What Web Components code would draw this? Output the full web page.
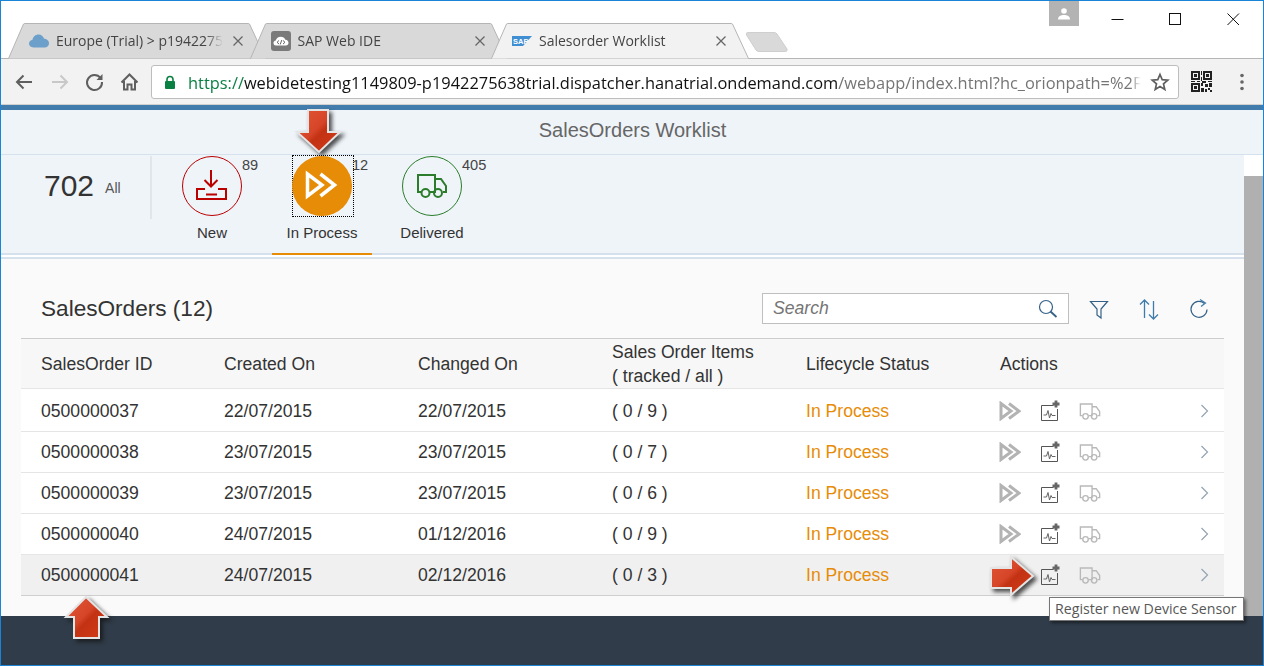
<!DOCTYPE html>
<html>
<head>
<meta charset="utf-8">
<title>Salesorder Worklist</title>
<style>
html, body { margin: 0; padding: 0; height: 100%; overflow: hidden; background: #fff; }
</style>
</head>
<body>
<so-app></so-app>
<script>
const truckPaths = `<path d="M20 37H17V20H34V37H29M34 24H40L45 31V37H42M34 37V24M32 37H34"/><circle cx="24.5" cy="38" r="4"/><circle cx="37" cy="38" r="4"/>`;

// browser tab
class BrowserTab extends HTMLElement {
  constructor() {
    super();
    const active = this.hasAttribute('active');
    const fill = active ? '#f2f2f2' : '#d9d9d9';
    this.attachShadow({ mode: 'open' }).innerHTML = `
<style>
:host { display: block; position: relative; width: 258px; height: 36px; margin-right: -16.5px; flex: none; font: 14px "Open Sans", sans-serif; color: #444; z-index: ${active ? 2 : 1}; }
svg.shape { position: absolute; left: 0; top: 0; }
.in { position: relative; display: flex; align-items: center; height: 35px; padding-left: 21px; box-sizing: border-box; }
.fav { width: 20px; height: 20px; flex: none; display: flex; }
.name { margin-left: 7px; width: 167px; white-space: nowrap; overflow: hidden; -webkit-mask-image: linear-gradient(to right, #000 150px, transparent 167px); mask-image: linear-gradient(to right, #000 150px, transparent 167px); }
.x { margin-left: 9px; width: 12px; height: 12px; flex: none; }
</style>
<svg class="shape" width="258" height="36"><path d="M0.5 35.5 L15.5 1 Q16 0.5 17 0.5 H240 Q241 0.5 241.5 1 L257.5 35.5" fill="${fill}" stroke="#b5b5b5"/></svg>
<div class="in">
  <div class="fav"><slot name="icon"></slot></div>
  <div class="name"><slot></slot></div>
  <svg class="x" viewBox="0 0 12 12"><path d="M1.5 1.5L10.5 10.5M10.5 1.5L1.5 10.5" stroke="#666" stroke-width="1.3"/></svg>
</div>`;
  }
}
customElements.define('browser-tab', BrowserTab);

// tab strip and address bar
class BrowserBar extends HTMLElement {
  constructor() {
    super();
    this.attachShadow({ mode: 'open' }).innerHTML = `
<style>
:host { display: block; }
.top { height: 57px; background: #fff; border-bottom: 1px solid #b5b5b5; position: relative; display: flex; justify-content: space-between; }
.tabs { display: flex; align-items: flex-end; padding-left: 7px; margin-bottom: -1px; }
.newtab { margin-left: 12px; align-self: flex-start; margin-top: 30px; }
.win { display: flex; align-items: flex-start; padding-right: 1px; }
.profile { width: 30px; height: 25px; background: #b3b3b3; display: flex; align-items: center; justify-content: center; margin-right: 9px; }
.wbtn { width: 58px; height: 36px; display: flex; align-items: center; justify-content: center; }
.tool { height: 45px; background: #f2f2f2; border-bottom: 1px solid #d0d0d0; display: flex; align-items: center; }
.nav { display: flex; width: 150px; padding-left: 6px; box-sizing: border-box; flex: none; }
.nav svg { width: 35px; height: 24px; flex: none; }
.addr { flex: none; width: 1028px; height: 34px; box-sizing: border-box; margin-top: 1px; background: #fff; border: 1px solid #bdbdbd; border-radius: 3px; display: flex; align-items: center; }
.lock { margin-left: 12px; width: 12px; height: 15px; flex: none; }
.url { margin-left: 12px; width: 953px; flex: none; white-space: nowrap; overflow: hidden; font: 16.4px "Open Sans", sans-serif; color: #757575; -webkit-mask-image: linear-gradient(to right, #000 942px, transparent 953px); mask-image: linear-gradient(to right, #000 942px, transparent 953px); }
.url b { font-weight: 400; color: #0b8043; }
.url i { font-style: normal; color: #111; }
.star { margin-left: 9px; flex: none; }
.qr { margin-left: 12px; flex: none; }
.dots { margin-left: 27px; flex: none; }
</style>
<div class="top">
  <div class="tabs">
    <browser-tab>
      <svg slot="icon" width="20" height="20" viewBox="0 0 20 20"><path d="M4.5 16.5 C1.5 16.5 0 14.6 0 12.6 C0 10.4 1.6 9 3.4 8.9 C4 5.6 6.600 3.500 9.500 3.500 C12.200 3.500 14.300 5.200 15 7.700 C17.900 7.800 20 9.800 20 12.300 C20 14.700 18.200 16.500 15.500 16.500 Z" fill="#6c9fca"/></svg>
      Europe (Trial) &gt; p1942275638trial
    </browser-tab>
    <browser-tab>
      <svg slot="icon" width="20" height="20" viewBox="0 0 20 20"><rect width="20" height="20" rx="3" fill="#7a7a7a"/><path d="M5 14.500 C3 14.500 2.500 13 2.500 12 C2.500 10.500 3.500 9.600 4.800 9.500 C5.300 7.300 7.300 5.800 9.700 5.800 C12 5.800 13.700 7 14.400 8.800 C16.300 8.900 17.500 10.300 17.500 11.800 C17.500 13.500 16.300 14.500 15 14.500 Z" fill="#fff"/><path d="M8 9.500L6 11.300L8 13M12 9.500L14 11.300L12 13M10.800 9L9.200 13.500" fill="none" stroke="#666" stroke-width="1"/></svg>
      SAP Web IDE
    </browser-tab>
    <browser-tab active>
      <svg slot="icon" width="20" height="20" viewBox="0 0 20 20"><path d="M0 5 H20 L11 15 H0 Z" fill="#3f8fd2"/><text x="1" y="12.500" font-family="Liberation Sans, sans-serif" font-size="7.500" font-weight="700" fill="#fff">SAP</text></svg>
      Salesorder Worklist
    </browser-tab>
    <svg class="newtab" width="44" height="22" viewBox="0 0 44 22"><path d="M3 1.500 H29 Q31 1.500 32 3 L42 18 Q43 20.500 40 20.500 H14 Q12 20.500 11 19 L1.500 4 Q0.500 1.500 3 1.500 Z" fill="#d9d9d9" stroke="#cfcfcf"/></svg>
  </div>
  <div class="win">
    <div class="profile"><svg width="14" height="12" viewBox="0 0 14 12"><circle cx="7" cy="3" r="2.800" fill="#fff"/><path d="M1 11.500 C1 8 4 7 7 7 C10 7 13 8 13 11.500 Z" fill="#fff"/></svg></div>
    <div class="wbtn"><svg width="14" height="14" viewBox="0 0 14 14"><path d="M1.500 7.500H13.500" stroke="#111"/></svg></div>
    <div class="wbtn"><svg width="14" height="14" viewBox="0 0 14 14"><rect x="1.500" y="1.500" width="11" height="11" fill="none" stroke="#111"/></svg></div>
    <div class="wbtn"><svg width="14" height="14" viewBox="0 0 14 14"><path d="M1.500 1.500L13 13M13 1.500L1.500 13" stroke="#111"/></svg></div>
  </div>
</div>
<div class="tool">
  <div class="nav">
    <svg viewBox="0 0 35 24"><path d="M25 12H10M16.500 5.500L10 12L16.500 18.500" fill="none" stroke="#5f5f5f" stroke-width="2"/></svg>
    <svg viewBox="0 0 35 24"><path d="M10 12H25M18.500 5.500L25 12L18.500 18.500" fill="none" stroke="#c8c8c8" stroke-width="2"/></svg>
    <svg viewBox="0 0 35 24"><path d="M23.500 8 A7.500 7.500 0 1 0 25 12" fill="none" stroke="#5f5f5f" stroke-width="2"/><path d="M25.500 4V10H19.500Z" fill="#5f5f5f"/></svg>
    <svg viewBox="0 0 35 24"><path d="M9.500 12.500L17.500 4.500L25.500 12.500M12 11V19.500H15.500V14.500H19.500V19.500H23V11" fill="none" stroke="#5f5f5f" stroke-width="2"/></svg>
  </div>
  <div class="addr">
    <svg class="lock" viewBox="0 0 12 15"><path d="M3 7V4.500A3 3 0 0 1 9 4.500V7" fill="none" stroke="#0b8043" stroke-width="1.600"/><rect x="1" y="6" width="10" height="8" rx="1" fill="#0b8043"/></svg>
    <div class="url"><b>https://</b><i>webidetesting1149809-p1942275638trial.dispatcher.hanatrial.ondemand.com</i>/webapp/index.html?hc_orionpath=%2F</div>
    <svg class="star" width="20" height="20" viewBox="0 0 20 20"><path d="M10 2.500L12.200 7.700L17.800 8.200L13.500 11.900L14.800 17.400L10 14.500L5.200 17.400L6.500 11.900L2.200 8.200L7.800 7.700Z" fill="none" stroke="#5f5f5f" stroke-width="1.700"/></svg>
  </div>
  <svg class="qr" width="22" height="22" viewBox="0 0 22 22" shape-rendering="crispEdges"><path fill="#222" d="M0 0h9v9H0zM2 2v5h5V2zM3 3h3v3H3zM12 0h9v9h-9zM14 2v5h5V2zM15 3h3v3h-3zM0 12h9v9H0zM2 14v5h5v-5zM3 15h3v3H3zM10 0h1v4h-1zM10 6h1v4h-1zM0 10h4v1H0zM6 10h3v1H6zM11 10h4v2h-4zM17 10h4v1h-4zM10 12h2v3h-2zM14 13h3v3h-3zM18 12h3v4h-3zM10 17h3v4h-3zM14 18h2v3h-2zM17 17h2v2h-2zM19 19h2v2h-2z"/></svg>
  <svg class="dots" width="4" height="18" viewBox="0 0 4 18"><circle cx="2" cy="2.500" r="1.800" fill="#666"/><circle cx="2" cy="9" r="1.800" fill="#666"/><circle cx="2" cy="15.500" r="1.800" fill="#666"/></svg>
</div>`;
  }
}
customElements.define('browser-bar', BrowserBar);

// icon tab of the filter bar
class FilterTab extends HTMLElement {
  constructor() {
    super();
    const selected = this.hasAttribute('selected');
    const color = this.getAttribute('color');
    this.attachShadow({ mode: 'open' }).innerHTML = `
<style>
:host { display: block; width: 100px; position: relative; height: 100px; box-sizing: border-box; border-bottom: 2px solid ${selected ? '#e78c07' : 'transparent'}; }
.c { position: absolute; left: 19px; top: 0; width: 62px; height: 62px; }
.focus { position: absolute; left: 20px; top: 0; width: 62px; height: 62px; box-sizing: border-box; border: 1px dotted #000; }
svg { position: absolute; left: 0; top: 0; }
.count { position: absolute; left: 80px; top: 1px; font-size: 14.6px; line-height: 18px; color: #444; }
.label { position: absolute; left: 0; right: 0; top: 69px; text-align: center; font-size: 15px; line-height: 18px; color: #333; white-space: nowrap; }
</style>
${selected ? '<div class="focus"></div>' : ''}
<div class="c"><svg width="62" height="62" viewBox="0 0 62 62"><circle cx="31" cy="31" r="${selected ? 30 : 29.500}" fill="${selected ? color : 'none'}" stroke="${color}" stroke-width="${selected ? 0 : 1}"/>${this.getIcon()}</svg></div>
<span class="count">${this.getAttribute('count')}</span>
<span class="label">${this.getAttribute('label')}</span>`;
  }
  getIcon() {
    const kind = this.getAttribute('icon');
    if (kind === 'inbox') return `<g fill="none" stroke="#bb0000" stroke-width="2"><path d="M30 15V31M23.500 25L30 31.500L36.500 25"/><path d="M24 34H16V44H45V34H37M25 39.500H36"/></g>`;
    if (kind === 'process') return `<g fill="none" stroke="#fff" stroke-width="3.500" stroke-linejoin="miter"><path d="M16.500 19V41L31 30Z"/><path d="M29.500 19L43.500 30L29.500 41"/></g>`;
    return `<g fill="none" stroke="#2b7d2b" stroke-width="2">${truckPaths}</g>`;
  }
}
customElements.define('filter-tab', FilterTab);

// row of the table
class OrderRow extends HTMLElement {
  constructor() {
    super();
    const hover = this.hasAttribute('hover');
    this.attachShadow({ mode: 'open' }).innerHTML = `
<style>
:host { display: grid; grid-template-columns: 203px 194px 194px 194px 194px 1fr; height: 41px; box-sizing: border-box; border-bottom: 1px solid ${hover ? '#cfcfcf' : '#e5e5e5'}; background: ${hover ? '#f0f0f0' : '#fff'}; align-items: center; font-size: 17.6px; color: #333; }
.no { padding-left: 20px; }
.st { color: #e78c07; }
.act { display: flex; align-items: center; padding-right: 15px; margin-left: -1px; }
.act svg { flex: none; display: block; }
.go { visibility: ${hover ? 'hidden' : 'visible'}; }
.sens { margin-left: 18px; }
.truck { margin-left: 18px; }
.chev { margin-left: auto; }
</style>
<div class="no">${this.getAttribute('no')}</div>
<div>${this.getAttribute('created')}</div>
<div>${this.getAttribute('changed')}</div>
<div>${this.getAttribute('items')}</div>
<div class="st">In Process</div>
<div class="act">
  <svg class="go" width="22" height="20" viewBox="0 0 22 20"><g fill="none" stroke="#b3b3b3" stroke-width="3"><path d="M2 2.500V17.500L12 10Z"/><path d="M10 2.500L20 10L10 17.500"/></g></svg>
  <svg class="sens" width="22" height="22" viewBox="0 0 22 22"><path d="M14.500 5.500H2.500V20.500H18.500V9" fill="none" stroke="#555"/><path d="M4.500 15H7.500L9 10.500L10.500 18L12 13.500L13 15.500L16.500 15.500" fill="none" stroke="#666"/><path d="M17 0.500V7.500M13.500 4H20.500" stroke="#666" stroke-width="2.800"/></svg>
  <svg class="truck" width="22" height="19" viewBox="15 18 32 26"><g fill="none" stroke="#b9b9b9" stroke-width="2">${truckPaths}</g></svg>
  <svg class="chev" width="9" height="14" viewBox="0 0 9 14"><path d="M1.500 1L7.500 7L1.500 13" fill="none" stroke="#94a3b0" stroke-width="1.200"/></svg>
</div>`;
  }
}
customElements.define('order-row', OrderRow);

// big red marker arrow drawn on top of the page
class RedArrow extends HTMLElement {
  constructor() {
    super();
    const id = this.getAttribute('name');
    const w = this.getAttribute('w'), h = this.getAttribute('h');
    this.attachShadow({ mode: 'open' }).innerHTML = `
<style>
:host { display: block; position: absolute; left: ${this.getAttribute('x')}px; top: ${this.getAttribute('y')}px; width: ${w}px; height: ${h}px; pointer-events: none; }
svg { display: block; overflow: visible; filter: drop-shadow(3px 3px 2px rgba(20,20,20,.75)); }
</style>
<svg width="${w}" height="${h}">
  <defs><linearGradient id="${id}" x1="0" y1="0" x2="1" y2="1"><stop offset="0" stop-color="#e3563a"/><stop offset=".45" stop-color="#d64527"/><stop offset=".55" stop-color="#c23213"/><stop offset="1" stop-color="#d53c1a"/></linearGradient></defs>
  <polygon points="${this.getAttribute('points')}" fill="url(#${id})" stroke="#e4e4e4" stroke-width="2" stroke-linejoin="miter"/>
</svg>`;
  }
}
customElements.define('red-arrow', RedArrow);

class HoverTip extends HTMLElement {
  constructor() {
    super();
    this.attachShadow({ mode: 'open' }).innerHTML = `
<style>
:host { display: block; position: absolute; left: 1048px; top: 596px; width: 195px; height: 24px; box-sizing: border-box; background: #fff; border: 1px solid #767676; box-shadow: 2px 2px 3px rgba(0,0,0,.45); font: 14.2px "Open Sans", sans-serif; color: #575757; line-height: 22px; padding-left: 5px; white-space: nowrap; overflow: hidden; }
</style>
<slot></slot>`;
  }
}
customElements.define('hover-tip', HoverTip);

// the worklist page
class WorklistPage extends HTMLElement {
  constructor() {
    super();
    this.attachShadow({ mode: 'open' }).innerHTML = `
<style>
:host { display: flex; flex-direction: column; flex: 1; min-height: 0; font-family: "Liberation Sans", Arial, sans-serif; color: #333; }
.blue { height: 5px; background: #427cac; flex: none; }
.head { height: 44px; box-sizing: content-box; flex: none; background: #eff4f9; border-bottom: 1px solid #d5e2ee; display: flex; align-items: center; justify-content: center; font-size: 20px; color: #666; padding-left: 1px; }
.head span { margin-bottom: 4px; }
.mid { display: flex; flex: none; height: 461px; }
.left { width: 1243px; flex: none; display: flex; flex-direction: column; }
.sb { flex: 1; display: flex; flex-direction: column; background: #fff; }
.sb div { margin-top: 21px; flex: 1; background: #b0b0b0; }
.filter { height: 100px; background: #eff4f9; display: flex; position: relative; flex: none; }
.filter::after { content: ""; position: absolute; left: 0; right: 0; bottom: 0; height: 2px; background: #d5e2ee; }
.filter filter-tab { position: relative; z-index: 1; }
.total { width: 149px; height: 63px; margin-top: 1px; border-right: 2px solid #e2e5e9; display: flex; align-items: flex-start; flex: none; }
.total span { margin-left: 43px; margin-top: 12px; font-size: 30px; line-height: 36px; color: #333; }
.total small { margin-left: 11px; margin-top: 24px; font-size: 14px; line-height: 16px; color: #555; }
.tabs { display: flex; gap: 10px; margin-left: 10px; }
.gap { background: #fff; height: 2px; flex: none; }
.gap2 { height: 2px; background: #d5e2ee; flex: none; }
.content { flex: 1; background: #fafafa; padding: 0 20px; }
.bar { height: 79px; display: flex; align-items: center; box-sizing: border-box; padding-top: 20px; }
h2 { margin: 0 0 0 20px; font-weight: 400; font-size: 22.6px; color: #333; flex: 1; }
.search { width: 307px; height: 31px; box-sizing: border-box; background: #fff; border: 1px solid #bfbfbf; display: flex; align-items: center; padding: 0 10px 0 10px; font-size: 17.6px; font-style: italic; color: #757575; }
.search span { flex: 1; }
.tools { display: flex; margin-left: 5px; width: 150px; flex: none; }
.tools svg { width: 50px; height: 24px; flex: none; }
.table { border-top: 1px solid #ccc; }
.th { display: grid; grid-template-columns: 203px 194px 194px 194px 194px 1fr; height: 50px; background: #f7f7f7; align-items: center; font-size: 17.6px; line-height: 24px; color: #333; border-bottom: 1px solid #e5e5e5; box-sizing: border-box; }
.th div:first-child { padding-left: 20px; }
.sp { height: 2px; background: #fff; }
.foot { flex: 1; background: #303c49; }
</style>
<div class="blue"></div>
<div class="head"><span>SalesOrders Worklist</span></div>
<div class="mid">
  <div class="left">
    <div class="filter">
      <div class="total"><span>702</span><small>All</small></div>
      <div class="tabs">
        <filter-tab label="New" count="89" color="#bb0000" icon="inbox"></filter-tab>
        <filter-tab label="In Process" count="12" color="#e78c07" icon="process" selected></filter-tab>
        <filter-tab label="Delivered" count="405" color="#2b7d2b" icon="truck"></filter-tab>
      </div>
    </div>
    <div class="gap"></div>
    <div class="gap2"></div>
    <div class="content">
      <div class="bar">
        <h2>SalesOrders (12)</h2>
        <div class="search"><span>Search</span>
          <svg width="20" height="20" viewBox="0 0 20 20"><circle cx="8" cy="8" r="6.500" fill="none" stroke="#346187" stroke-width="1.200"/><path d="M12.500 12.500L18.500 18" stroke="#346187" stroke-width="1.800"/></svg>
        </div>
        <div class="tools">
          <svg viewBox="0 0 50 24"><path d="M16.500 4.500H33.500L27 12V21L23 18V12Z" fill="none" stroke="#346187" stroke-width="1.200"/></svg>
          <svg viewBox="0 0 50 24"><path d="M20.500 21V3M16 7.500L20.500 3L25 7.500M29.500 4V22M25 17.500L29.500 22L34 17.500" fill="none" stroke="#3f7cab" stroke-width="1.300"/></svg>
          <svg viewBox="0 0 50 24"><path d="M30.500 6.500A8 8 0 1 0 33 12.500" fill="none" stroke="#346187" stroke-width="1.200"/><path d="M26 2.500L31.500 6L27 9.500" fill="none" stroke="#3f7cab" stroke-width="1.200"/></svg>
        </div>
      </div>
      <div class="table">
        <div class="th"><div>SalesOrder ID</div><div>Created On</div><div>Changed On</div><div>Sales Order Items<br>( tracked / all )</div><div>Lifecycle Status</div><div>Actions</div></div>
        <div class="sp"></div>
        <order-row no="0500000037" created="22/07/2015" changed="22/07/2015" items="( 0 / 9 )"></order-row>
        <order-row no="0500000038" created="23/07/2015" changed="23/07/2015" items="( 0 / 7 )"></order-row>
        <order-row no="0500000039" created="23/07/2015" changed="23/07/2015" items="( 0 / 6 )"></order-row>
        <order-row no="0500000040" created="24/07/2015" changed="01/12/2016" items="( 0 / 9 )"></order-row>
        <order-row no="0500000041" created="24/07/2015" changed="02/12/2016" items="( 0 / 3 )" hover></order-row>
      </div>
    </div>
  </div>
  <div class="sb"><div></div></div>
</div>
<div class="foot"></div>`;
  }
}
customElements.define('worklist-page', WorklistPage);

class SoApp extends HTMLElement {
  constructor() {
    super();
    this.attachShadow({ mode: 'open' }).innerHTML = `
<style>
:host { display: flex; flex-direction: column; position: relative; width: 1264px; height: 666px; box-sizing: border-box; border: 1px solid #1a84d6; background: #fff; overflow: hidden; }
</style>
<browser-bar></browser-bar>
<worklist-page></worklist-page>
<red-arrow name="a1" x="296" y="108" w="44" h="44" points="11,1 31,1 31,23 43,23 22,43 0,23 11,23"></red-arrow>
<red-arrow name="a2" x="64" y="595" w="44" h="44" points="21,1 42,21 34,21 34,42 9,42 9,21 1,21"></red-arrow>
<red-arrow name="a3" x="989" y="555" w="44" h="40" points="1,12 21,12 21,1 43,20 21,39 21,32 1,32"></red-arrow>
<hover-tip>Register new Device Sensor</hover-tip>`;
  }
}
customElements.define('so-app', SoApp);
</script>
</body>
</html>
